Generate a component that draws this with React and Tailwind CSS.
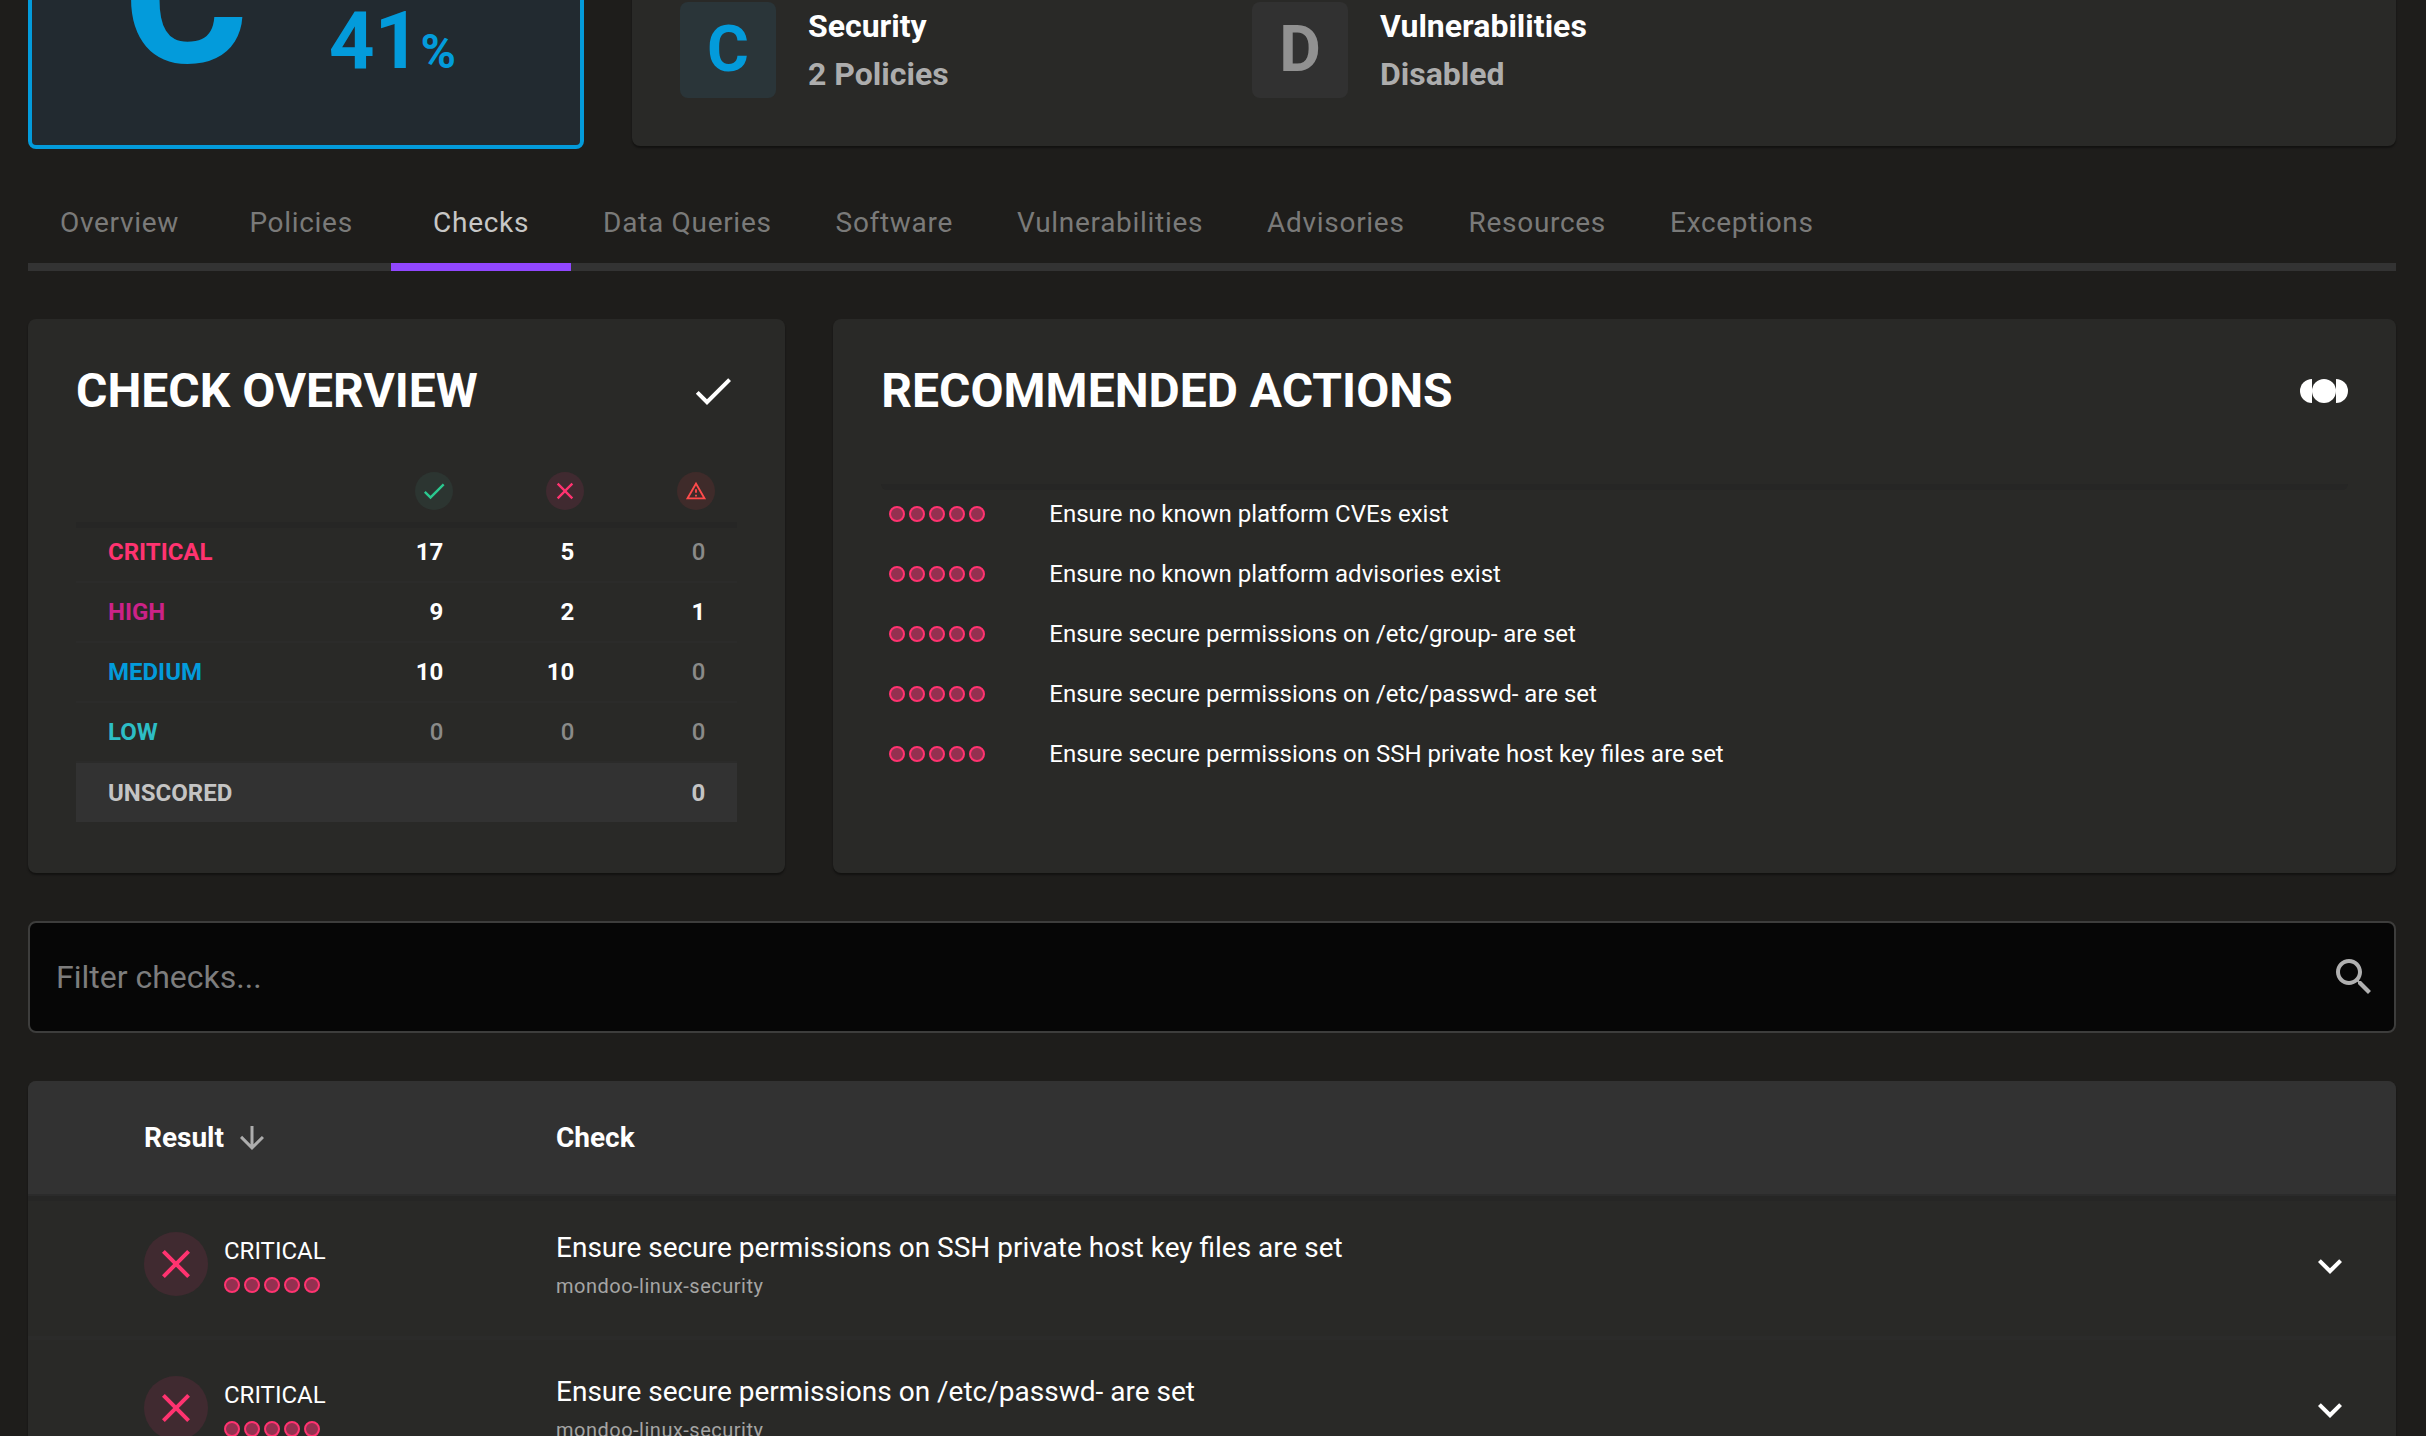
import React from "react";

const PATHS = {
  check: "M9 16.17 4.83 12l-1.42 1.41L9 19 21 7l-1.41-1.41z",
  close:
    "M19 6.41 17.59 5 12 10.59 6.41 5 5 6.41 10.59 12 5 17.59 6.41 19 12 13.41 17.59 19 19 17.59 13.41 12z",
  warning:
    "M12 5.99 19.53 19H4.47L12 5.99M12 2 1 21h22L12 2zm1 14h-2v2h2v-2zm0-6h-2v4h2v-4z",
  search:
    "M15.5 14h-.79l-.28-.27C15.41 12.59 16 11.11 16 9.5 16 5.91 13.09 3 9.5 3S3 5.91 3 9.5 5.91 16 9.5 16c1.61 0 3.09-.59 4.23-1.57l.27.28v.79l5 4.99L20.49 19l-4.99-5zm-6 0C7.01 14 5 11.99 5 9.5S7.01 5 9.5 5 14 7.01 14 9.5 11.99 14 9.5 14z",
  down: "M20 12l-1.41-1.41L13 16.17V4h-2v12.17l-5.58-5.59L4 12l8 8 8-8z",
  expand: "M16.59 8.59 12 13.17 7.41 8.59 6 10l6 6 6-6z",
};

function Icon({ name, className }) {
  return (
    <svg viewBox="0 0 24 24" fill="currentColor" aria-hidden="true" className={className}>
      <path d={PATHS[name]} />
    </svg>
  );
}

function Dots() {
  return (
    <span className="flex gap-1" role="img" aria-label="Impact 5 of 5">
      {[0, 1, 2, 3, 4].map((i) => (
        <span key={i} className="size-4 rounded-full border-2 border-[#ff3370] bg-[#943050]" />
      ))}
    </span>
  );
}

const CARD = "bg-[#292927] shadow-[0_2px_2px_rgba(0,0,0,0.4)]";

function Grade({ letter, title, detail, tile }) {
  return (
    <div className="flex gap-8">
      <div className={`flex size-24 items-center justify-center rounded-lg text-[64px] font-bold ${tile}`}>
        {letter}
      </div>
      <div className="text-[32px] leading-12 font-bold">
        <div>{title}</div>
        <div className="text-[#adadad]">{detail}</div>
      </div>
    </div>
  );
}

const TABS = [
  "Overview",
  "Policies",
  "Checks",
  "Data Queries",
  "Software",
  "Vulnerabilities",
  "Advisories",
  "Resources",
  "Exceptions",
];

const COUNTS = [
  ["CRITICAL", "text-[#ff3370]", [17, 5, 0]],
  ["HIGH", "text-[#cc2288]", [9, 2, 1]],
  ["MEDIUM", "text-[#039bdb]", [10, 10, 0]],
  ["LOW", "text-[#2dbdc5]", [0, 0, 0]],
];

const STATES = [
  ["Passed", "check", "size-7", "bg-[#2c3531] text-[#2bc88f]"],
  ["Failed", "close", "size-7", "bg-[#402a30] text-[#ff3370]"],
  ["Errored", "warning", "size-[22px]", "bg-[#3f2b2a] text-[#ff4b4b]"],
];

const ACTIONS = [
  "Ensure no known platform CVEs exist",
  "Ensure no known platform advisories exist",
  "Ensure secure permissions on /etc/group- are set",
  "Ensure secure permissions on /etc/passwd- are set",
  "Ensure secure permissions on SSH private host key files are set",
];

const CHECKS = [
  "Ensure secure permissions on SSH private host key files are set",
  "Ensure secure permissions on /etc/passwd- are set",
];

export default function App() {
  return (
    <div className="h-screen overflow-hidden bg-[#1e1d1b] font-[Roboto,sans-serif] text-white">
      <main className="-mt-[155px] pr-[30px] pl-7">
        <section className="grid grid-cols-4 gap-12">
          <div className="flex h-[304px] items-center gap-20 rounded-lg border-4 border-[#039bdb] bg-[#222a30] pl-[91px] font-bold text-[#039bdb]">
            <span className="text-[192px] leading-none">C</span>
            <span className="pt-22 text-[80px] leading-none">
              41<span className="text-[48px]">%</span>
            </span>
          </div>
          <div className={`col-span-3 mb-[3px] grid grid-cols-3 items-end gap-12 rounded-lg p-12 ${CARD}`}>
            <Grade letter="C" title="Security" detail="2 Policies" tile="bg-[#2a3539] text-[#039bdb]" />
            <Grade letter="D" title="Vulnerabilities" detail="Disabled" tile="bg-[#313131] text-[#919191]" />
          </div>
        </section>

        <nav className="mt-[26px] flex border-b-8 border-[#333333]">
          {TABS.map((tab) => (
            <button
              key={tab}
              type="button"
              className={
                tab === "Checks"
                  ? "-mb-2 h-24 min-w-[180px] border-b-8 border-[#9147ff] px-8 pt-2 text-[28px] tracking-wide text-[#c7c7c6]"
                  : "-mb-2 h-24 min-w-[180px] border-b-8 border-transparent px-8 pt-2 text-[28px] tracking-wide text-[#7a7a79]"
              }
            >
              {tab}
            </button>
          ))}
        </nav>

        <section className="mt-12 grid grid-cols-3 gap-12">
          <div className={`rounded-lg px-12 pt-12 pb-[51px] ${CARD}`}>
            <div className="flex items-center justify-between">
              <h2 className="text-[48px] leading-12 font-bold">CHECK OVERVIEW</h2>
              <Icon name="check" className="size-12" />
            </div>
            <table className="mt-11 w-full table-fixed border-collapse text-2xl font-bold">
              <thead>
                <tr className="h-[63px] shadow-[0_6px_0_#262625]">
                  <th />
                  {STATES.map(([label, icon, size, color]) => (
                    <th key={label} className="w-[131px] pr-[22px]" aria-label={label}>
                      <span className={`ml-auto flex size-[38px] items-center justify-center rounded-full ${color}`}>
                        <Icon name={icon} className={size} />
                      </span>
                    </th>
                  ))}
                </tr>
              </thead>
              <tbody>
                {COUNTS.map(([label, color, counts]) => (
                  <tr key={label} className="h-[60px] border-b-2 border-[#2b2b2a]">
                    <th scope="row" className={`pl-8 text-left ${color}`}>{label}</th>
                    {counts.map((n, i) => (
                      <td key={i} className={n ? "pr-8 text-right" : "pr-8 text-right font-medium text-[#8a8a89]"}>
                        {n}
                      </td>
                    ))}
                  </tr>
                ))}
                <tr className="h-[60px] bg-[#323232] text-[#c4c4c4]">
                  <th scope="row" className="pl-8 text-left">UNSCORED</th>
                  <td />
                  <td />
                  <td className="pr-8 text-right">0</td>
                </tr>
              </tbody>
            </table>
          </div>

          <div className={`col-span-2 rounded-lg p-12 ${CARD}`}>
            <div className="flex items-center justify-between">
              <h2 className="text-[48px] leading-12 font-bold">RECOMMENDED ACTIONS</h2>
              <svg viewBox="0 0 48 24" fill="#ffffff" aria-hidden="true" className="h-6 w-12">
                <path d="M12 0a12 12 0 0 0 0 24z" />
                <circle cx="24" cy="12" r="12" />
                <path d="M36 0a12 12 0 0 1 0 24z" />
              </svg>
            </div>
            <div className="mt-[69px] h-1.5 rounded-b-lg bg-[#262625]" />
            <ul className="-mt-1.5 text-2xl">
              {ACTIONS.map((action) => (
                <li key={action} className="flex h-[60px] items-center gap-16 px-2">
                  <Dots />
                  {action}
                </li>
              ))}
            </ul>
          </div>
        </section>

        <div className="mt-12 flex h-28 items-center rounded-lg border-2 border-[#3d3d3c] bg-[#060606] pr-4 pl-[26px]">
          <input
            type="text"
            aria-label="Filter checks"
            placeholder="Filter checks..."
            className="min-w-0 flex-1 bg-transparent text-[32px] outline-none placeholder:text-[#7d7d7d]"
          />
          <button type="button" aria-label="Search" className="text-[#b0b0b0]">
            <Icon name="search" className="size-12" />
          </button>
        </div>

        <div className={`mt-12 overflow-hidden rounded-t-lg ${CARD}`}>
          <table className="w-full table-fixed border-collapse text-left">
            <thead>
              <tr className="h-[114px] border-b-2 border-[#2b2b2b] bg-[#323232] text-[28px] shadow-[0_6px_0_#262625]">
                <th className="w-[528px] pl-[116px]">
                  <button type="button" className="flex items-center gap-2.5">
                    Result
                    <Icon name="down" className="size-9 text-[#adadad]" />
                  </button>
                </th>
                <th>Check</th>
                <th className="w-[90px]" aria-label="Expand" />
              </tr>
            </thead>
            <tbody>
              {CHECKS.map((check) => (
                <tr key={check} className="h-[143px] border-b-4 border-[#2b2b2a]">
                  <td className="pb-1 pl-[116px]">
                    <div className="flex items-center gap-4">
                      <span className="flex size-16 items-center justify-center rounded-full bg-[#402a30] text-[#ff3370]">
                        <Icon name="close" className="size-12" />
                      </span>
                      <span className="flex flex-col gap-2.5 text-2xl">
                        CRITICAL
                        <Dots />
                      </span>
                    </div>
                  </td>
                  <td>
                    <div className="text-[28px] leading-10">{check}</div>
                    <div className="text-xl leading-9 tracking-wide text-[#a5a5a4]">mondoo-linux-security</div>
                  </td>
                  <td>
                    <button type="button" aria-label="Expand check" className="block">
                      <Icon name="expand" className="size-12" />
                    </button>
                  </td>
                </tr>
              ))}
            </tbody>
          </table>
        </div>
      </main>
    </div>
  );
}
